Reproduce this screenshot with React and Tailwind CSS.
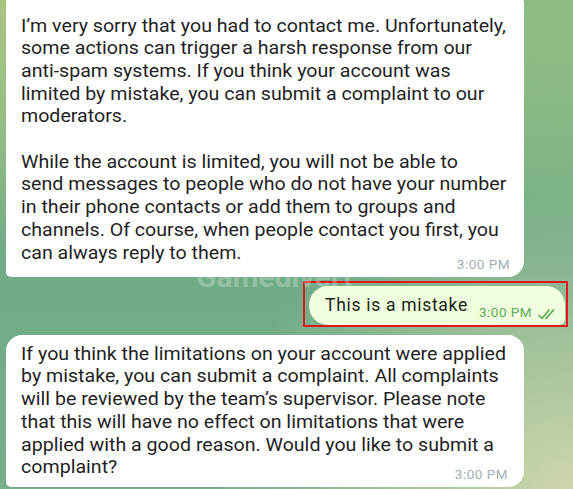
import React from "react";

const font = { fontFamily: "Roboto, 'Noto Sans', sans-serif" };

function Lines({ lines }) {
  return (
    <div className="text-[17.5px] leading-[22.7px] text-[#1f1f1f]">
      {lines.map((l, i) => (
        <div key={i} className="whitespace-nowrap min-h-[22.7px] origin-left scale-x-[1.12]">
          {l}
        </div>
      ))}
    </div>
  );
}

function Checks() {
  return (
    <svg width="22" height="12" viewBox="0 0 22 12" fill="none" stroke="#5fa85a" strokeWidth="1.7" strokeLinecap="round" strokeLinejoin="round">
      <path d="M2 7.5 L5 10.5 L12 2" />
      <path d="M9 10.5 L16.5 2" />
    </svg>
  );
}

export default function App() {
  return (
    <div
      style={font}
      className="relative w-[573px] h-[489px] overflow-hidden bg-[#80b68a] bg-[radial-gradient(ellipse_320px_260px_at_0%_0%,#a8c67f_0%,rgba(168,198,127,0)_100%),radial-gradient(ellipse_360px_300px_at_100%_100%,#cfd6ab_0%,rgba(207,214,171,0)_100%),radial-gradient(ellipse_300px_260px_at_100%_0%,#8fbd84_0%,rgba(143,189,132,0)_100%),linear-gradient(180deg,#8cbb84_0%,#6fab88_50%,#76ae8a_100%)]"
    >
      <div className="flex flex-col pl-[6px] pr-[7px]">
        {/* Bubble 1 */}
        <div className="relative -mt-[12px] w-[518px] bg-white rounded-[16px] rounded-bl-[5px] pl-[15px] pr-[10px] pt-[26.5px] pb-[12.5px]">
          <Lines
            lines={[
              "I’m very sorry that you had to contact me. Unfortunately,",
              "some actions can trigger a harsh response from our",
              "anti-spam systems. If you think your account was",
              "limited by mistake, you can submit a complaint to our",
              "moderators.",
              "",
              "While the account is limited, you will not be able to",
              "send messages to people who do not have your number",
              "in their phone contacts or add them to groups and",
              "channels. Of course, when people contact you first, you",
              "can always reply to them.",
            ]}
          />
          <span className="absolute right-[14px] bottom-[5px] whitespace-nowrap text-[13.5px] leading-none tracking-[0.5px] text-[#a5adb5]">
            3:00 PM
          </span>
        </div>

        {/* Outgoing */}
        <div className="flex justify-end mt-[4px] -mr-[2px]">
          <div className="border-2 border-[#e3161f] pl-[4px] pr-[1px] pt-[3px] w-[265px] h-[46px]">
            <div className="flex items-end h-[39px] bg-[#effedd] rounded-[19px] rounded-br-[6px] pl-[16px] pr-[8px]">
              <span className="shrink-0 whitespace-nowrap text-[17.5px] leading-none tracking-[0.7px] text-[#1d2519] mb-[10px]">This is a mistake</span>
              <span className="shrink-0 whitespace-nowrap ml-[11px] mb-[5px] text-[13.5px] leading-none tracking-[0.5px] text-[#63a95e]">3:00 PM</span>
              <span className="shrink-0 ml-[5px] mb-[5px]">
                <Checks />
              </span>
            </div>
          </div>
        </div>

        {/* Bubble 3 */}
        <div className="relative mt-[8px] w-[518px] bg-white rounded-[16px] rounded-bl-[5px] pl-[15px] pr-[10px] pt-[8px] pb-[8px]">
          <Lines
            lines={[
              "If you think the limitations on your account were applied",
              "by mistake, you can submit a complaint. All complaints",
              "will be reviewed by the team’s supervisor. Please note",
              "that this will have no effect on limitations that were",
              "applied with a good reason. Would you like to submit a",
              "complaint?",
            ]}
          />
          <span className="absolute right-[16px] bottom-[5.5px] whitespace-nowrap text-[13.5px] leading-none tracking-[0.5px] text-[#a5adb5]">
            3:00 PM
          </span>
        </div>
      </div>

      <div className="absolute left-[196px] top-[262px] text-[30px] leading-none font-bold text-white/25 pointer-events-none">
        Gamedivert
      </div>
    </div>
  );
}
